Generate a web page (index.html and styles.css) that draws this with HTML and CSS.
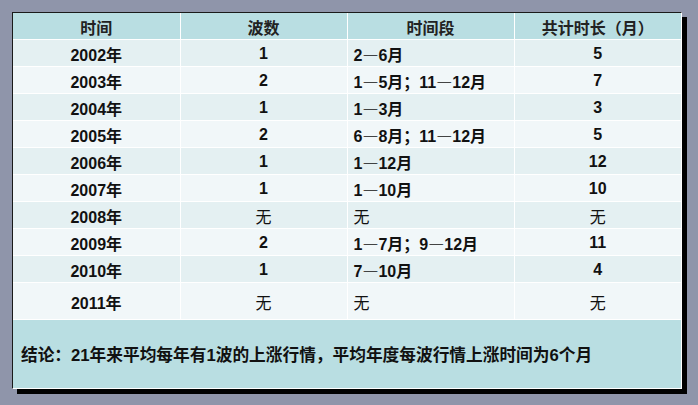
FILE: index.html
```html
<!DOCTYPE html>
<html lang="zh">
<head>
<meta charset="utf-8">
<link rel="stylesheet" href="styles.css">
</head>
<body>
<div class="panel">
  <table class="grid">
    <thead>
      <tr><th>时间</th><th>波数</th><th>时间段</th><th>共计时长（月）</th></tr>
    </thead>
    <tbody>
      <tr class="odd"><td>2002年</td><td>1</td><td class="range">2<span class="dash">—</span>6月</td><td>5</td></tr>
      <tr class="even"><td>2003年</td><td>2</td><td class="range">1<span class="dash">—</span>5月；11<span class="dash">—</span>12月</td><td>7</td></tr>
      <tr class="odd"><td>2004年</td><td>1</td><td class="range">1<span class="dash">—</span>3月</td><td>3</td></tr>
      <tr class="even"><td>2005年</td><td>2</td><td class="range">6<span class="dash">—</span>8月；11<span class="dash">—</span>12月</td><td>5</td></tr>
      <tr class="odd"><td>2006年</td><td>1</td><td class="range">1<span class="dash">—</span>12月</td><td>12</td></tr>
      <tr class="even"><td>2007年</td><td>1</td><td class="range">1<span class="dash">—</span>10月</td><td>10</td></tr>
      <tr class="odd"><td>2008年</td><td class="none">无</td><td class="range none">无</td><td class="none">无</td></tr>
      <tr class="even"><td>2009年</td><td>2</td><td class="range">1<span class="dash">—</span>7月；9<span class="dash">—</span>12月</td><td>11</td></tr>
      <tr class="odd"><td>2010年</td><td>1</td><td class="range">7<span class="dash">—</span>10月</td><td>4</td></tr>
      <tr class="even last"><td>2011年</td><td class="none">无</td><td class="range none">无</td><td class="none">无</td></tr>
    </tbody>
  </table>
  <div class="summary">结论：21年来平均每年有1波的上涨行情，平均年度每波行情上涨时间为6个月</div>
</div>
</body>
</html>
```

FILE: styles.css
```css
html, body {
  margin: 0;
  padding: 0;
}
body {
  width: 698px;
  height: 405px;
  background: #8f95aa;
  padding: 12px 0 0 12px;
  box-sizing: border-box;
  font-family: "Liberation Sans", "Noto Sans CJK SC", sans-serif;
}
.panel {
  width: 670px;
  border-top: 1px solid #1a1a1a;
  border-left: 1px solid #1a1a1a;
  border-right: 1px solid #ffffff;
  border-bottom: 1px solid #ffffff;
  box-shadow: 5px 5px 0 #000;
  background: #b9dee2;
  box-sizing: border-box;
}
.grid {
  width: 100%;
  border-collapse: collapse;
  table-layout: fixed;
}
.grid th, .grid td {
  border-right: 1px solid #ffffff;
  border-bottom: 1px solid #ffffff;
  padding: 2px 0 0 0;
  font-size: 16px;
  font-weight: bold;
  text-align: center;
  color: #111;
  height: 24px;
}
.grid th:last-child, .grid td:last-child {
  border-right: none;
}
.grid th {
  background: #b9dee2;
  color: #222;
}
.grid tr.odd td {
  background: #e4f0f2;
}
.grid tr.even td {
  background: #f1f7f9;
}
.grid tr.last td {
  height: 34px;
}
.grid td.range {
  text-align: left;
  padding-left: 6px;
}
.grid td.none {
  font-weight: normal;
}
.dash {
  font-weight: normal;
  font-family: "Noto Sans CJK SC", sans-serif;
}
.summary {
  height: 68px;
  display: flex;
  align-items: center;
  padding-left: 8px;
  font-size: 16.7px;
  font-weight: bold;
  color: #111;
}
```
